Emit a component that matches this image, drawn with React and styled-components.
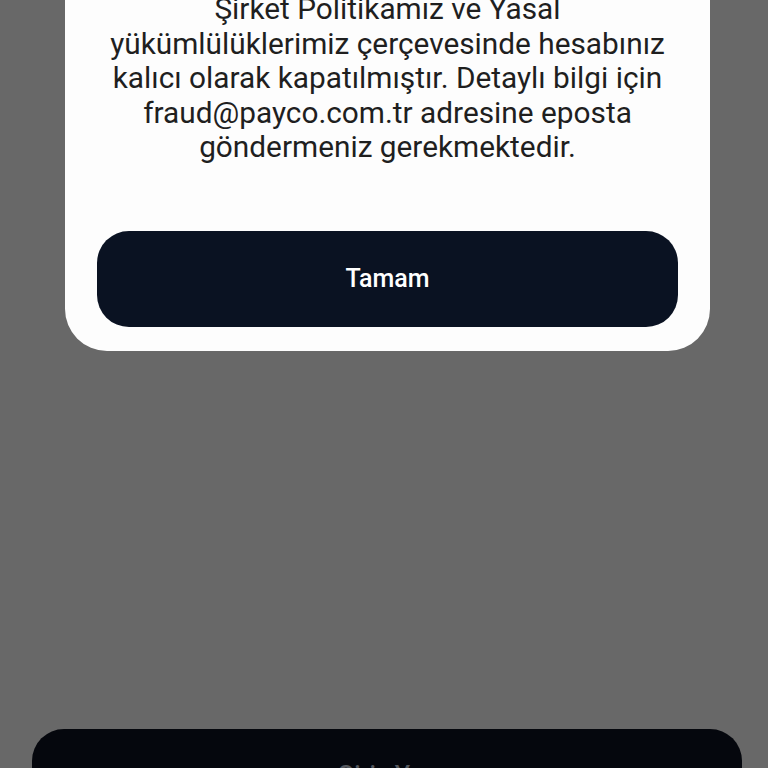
import React from "react";
import styled, { createGlobalStyle } from "styled-components";

const GlobalStyle = createGlobalStyle`
  html, body {
    margin: 0;
    padding: 0;
    background: #686868;
    overflow: hidden;
  }
  * {
    box-sizing: border-box;
  }
`;

const Screen = styled.div`
  height: 768px;
  display: flex;
  flex-direction: column;
  overflow: hidden;
  background: #686868;
  font-family: Roboto, "Noto Sans", sans-serif;
`;

const Card = styled.div`
  margin: -8px 58px 0 65px;
  background: #fdfdfd;
  border-radius: 0 0 42px 42px;
  padding: 0 32px 24px;
  display: flex;
  flex-direction: column;
`;

const Message = styled.p`
  margin: 0 0 66px;
  text-align: center;
  font-size: 29.8px;
  line-height: 34.6px;
  color: #1f1f1f;
`;

const Button = styled.button`
  height: ${(p) => p.h || 96}px;
  border: none;
  border-radius: 32px;
  background: ${(p) => (p.dim ? "#05070d" : "#0a1222")};
  color: ${(p) => (p.dim ? "#55585e" : "#ffffff")};
  font-family: Roboto, "Noto Sans", sans-serif;
  font-size: 25px;
  font-weight: 500;
  display: flex;
  align-items: center;
  justify-content: center;
  flex-shrink: 0;
`;

const BottomBar = styled.div`
  margin: auto 26px -53px 32px;
  display: flex;
  flex-direction: column;
`;

export default function App() {
  return (
    <>
      <GlobalStyle />
      <Screen>
        <Card>
          <Message>
            Şirket Politikamız ve Yasal
            <br />
            yükümlülüklerimiz çerçevesinde hesabınız kalıcı olarak
            kapatılmıştır. Detaylı bilgi için fraud@payco.com.tr adresine
            eposta göndermeniz gerekmektedir.
          </Message>
          <Button>Tamam</Button>
        </Card>
        <BottomBar>
          <Button dim h={92}>
            Giriş Yap
          </Button>
        </BottomBar>
      </Screen>
    </>
  );
}
